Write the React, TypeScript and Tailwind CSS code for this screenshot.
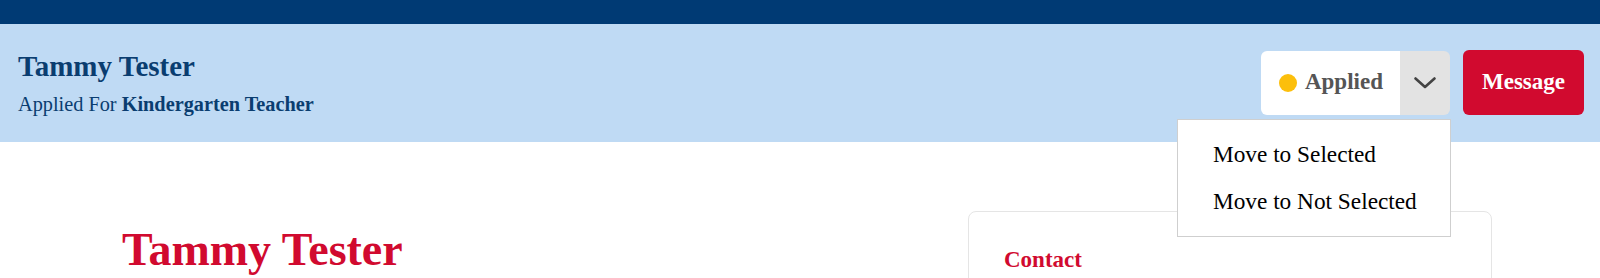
import React from "react";

export default function App() {
  const serif = { fontFamily: '"Liberation Serif", "Times New Roman", serif' };
  return (
    <div className="w-[1600px] min-h-[278px] bg-white" style={serif}>
      <div className="h-[24px] bg-[#003a74]" />
      <header className="h-[118px] bg-[#bfdaf4] flex items-center justify-between pl-[18px] pr-[16px]">
        <div className="flex flex-col">
          <h1 className="text-[29px] leading-[32px] font-bold text-[#0a3d70]">Tammy Tester</h1>
          <p className="mt-[10px] text-[20.3px] leading-[24px] text-[#0a3d70]">
            Applied For <span className="font-bold">Kindergarten Teacher</span>
          </p>
        </div>
        <div className="flex items-center gap-[13px] mt-[-1px]">
          <div className="relative">
            <div className="flex h-[64px] rounded-[6px] overflow-hidden">
              <div className="w-[139px] bg-white flex items-center pl-[18px] gap-[8px]">
                <span className="w-[18px] h-[18px] rounded-full bg-[#fcbf0c]" />
                <span className="text-[23px] font-bold text-[#555555]">Applied</span>
              </div>
              <div className="w-[50px] bg-[#e3e3e3] flex items-center justify-center">
                <svg width="22" height="12" viewBox="0 0 22 12" fill="none">
                  <polyline points="1.5,1.5 11,10 20.5,1.5" stroke="#444444" strokeWidth="2.6" strokeLinecap="round" strokeLinejoin="round" />
                </svg>
              </div>
            </div>
            <div className="absolute right-[-1px] top-full mt-[4px] w-[274px] bg-white border border-[#cfcfcf] py-[11px] z-10">
              <div className="pl-[35px] text-[23.3px] leading-[47px] text-black">Move to Selected</div>
              <div className="pl-[35px] text-[23.3px] leading-[47px] text-black">Move to Not Selected</div>
            </div>
          </div>
          <button className="h-[65px] px-[19px] rounded-[6px] bg-[#d10a2f] text-white text-[23px] font-bold">
            Message
          </button>
        </div>
      </header>
      <main className="flex pl-[122px] pr-[108px] pt-[69px]">
        <div className="flex-1">
          <h2 className="mt-[13px] text-[46px] leading-[52px] font-bold text-[#d10a2f]">Tammy Tester</h2>
        </div>
        <div className="w-[524px] h-[300px] border border-[#e5e5e5] rounded-[8px] pt-[35px] pl-[35px]">
          <h3 className="text-[23px] leading-[26px] font-bold text-[#d10a2f]">Contact</h3>
        </div>
      </main>
    </div>
  );
}
